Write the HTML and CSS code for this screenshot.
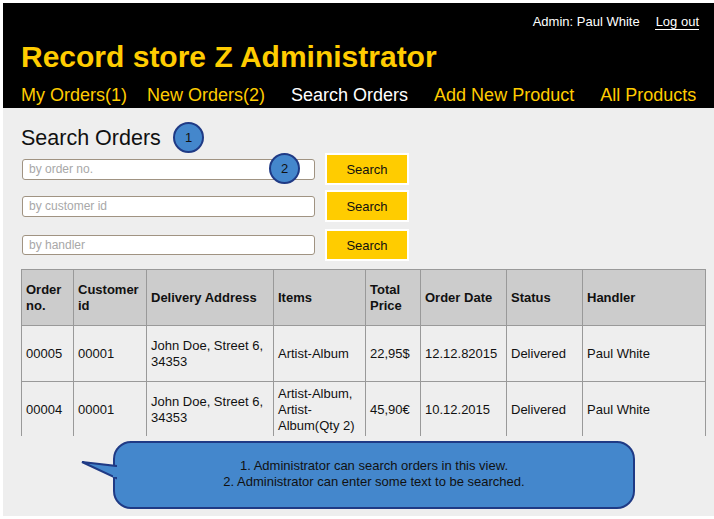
FILE: index.html
```html
<!DOCTYPE html>
<html>
<head>
<meta charset="utf-8">
<title>Search Orders</title>
<link rel="stylesheet" href="styles.css">
</head>
<body>
<div class="page">
  <header class="header">
    <div class="topbar">
      <span class="admin">Admin: Paul White</span>
      <a class="logout" href="#">Log out</a>
    </div>
    <div class="title">Record store Z Administrator</div>
    <nav class="nav">
      <a class="nav-item first" href="#">My Orders(1)</a>
      <a class="nav-item" href="#">New Orders(2)</a>
      <a class="nav-item active" href="#">Search Orders</a>
      <a class="nav-item" href="#">Add New Product</a>
      <a class="nav-item" href="#">All Products</a>
    </nav>
  </header>

  <main class="content">
    <h1 class="heading">Search Orders</h1>
    <div class="search-row row1">
      <input class="search-input" type="text" placeholder="by order no.">
      <button class="search-btn">Search</button>
    </div>
    <div class="search-row row2">
      <input class="search-input" type="text" placeholder="by customer id">
      <button class="search-btn">Search</button>
    </div>
    <div class="search-row row3">
      <input class="search-input" type="text" placeholder="by handler">
      <button class="search-btn">Search</button>
    </div>

    <div class="table-wrap">
      <table class="orders">
        <colgroup>
          <col class="c1"><col class="c2"><col class="c3"><col class="c4">
          <col class="c5"><col class="c6"><col class="c7"><col class="c8">
        </colgroup>
        <thead>
          <tr>
            <th>Order<br>no.</th>
            <th>Customer<br>id</th>
            <th>Delivery Address</th>
            <th>Items</th>
            <th>Total<br>Price</th>
            <th>Order Date</th>
            <th>Status</th>
            <th>Handler</th>
          </tr>
        </thead>
        <tbody>
          <tr>
            <td>00005</td>
            <td>00001</td>
            <td>John Doe, Street 6,<br>34353</td>
            <td>Artist-Album</td>
            <td>22,95$</td>
            <td>12.12.82015</td>
            <td>Delivered</td>
            <td>Paul White</td>
          </tr>
          <tr>
            <td>00004</td>
            <td>00001</td>
            <td>John Doe, Street 6,<br>34353</td>
            <td>Artist-Album,<br>Artist-<br>Album(Qty 2)</td>
            <td>45,90€</td>
            <td>10.12.2015</td>
            <td>Delivered</td>
            <td>Paul White</td>
          </tr>
        </tbody>
      </table>
    </div>
  </main>

  <div class="badge badge1">1</div>
  <div class="badge badge2">2</div>

  <div class="callout">
    <svg class="callout-tail" width="40" height="24" viewBox="0 0 40 24">
      <polygon points="2,3 36,7 36,19" fill="#4487cc" stroke="#1f3a85" stroke-width="2" stroke-linejoin="miter"/>
      <rect x="33" y="8" width="7" height="10" fill="#4487cc"/>
    </svg>
    <div class="callout-text">1. Administrator can search orders in this view.<br>2. Administrator can enter some text to be searched.</div>
  </div>
</div>
</body>
</html>
```

FILE: styles.css
```css
* { box-sizing: border-box; }

html, body {
  margin: 0;
  padding: 0;
  background: #ffffff;
}

.page {
  position: relative;
  margin: 3px 0 0 3px;
  height: 513px;
  background: #eeeeee;
  font-family: "Liberation Sans", Arial, sans-serif;
  color: #111;
  overflow: hidden;
}

/* Header */
.header {
  background: #000;
  height: 105px;
  display: flex;
  flex-direction: column;
}

.topbar {
  display: flex;
  justify-content: flex-end;
  align-items: flex-start;
  gap: 15px;
  padding: 11px 15px 0 0;
  font-size: 13px;
  line-height: 15px;
  color: #fff;
}

.logout {
  color: #fff;
  text-decoration: none;
  border-bottom: 1px solid #fff;
  padding-left: 1px;
  height: 16px;
}

.title {
  margin-top: 10px;
  padding-left: 18px;
  font-size: 30px;
  line-height: 34px;
  font-weight: bold;
  color: #ffcc00;
}

.nav {
  display: flex;
  gap: 26px;
  margin-top: 11px;
  padding-left: 18px;
  font-size: 18px;
  line-height: 21px;
}

.nav-item {
  color: #ffcc00;
  text-decoration: none;
}

.nav-item.first { margin-right: -6px; }

.nav-item.active { color: #fff; }

/* Content */
.content {
  padding-left: 18px;
}

.heading {
  margin: 17px 0 0 0;
  font-size: 21.5px;
  line-height: 26px;
  font-weight: normal;
  color: #111;
}

.search-row {
  display: flex;
  align-items: center;
  height: 32px;
}

.row1 { margin-top: 2px; }
.row2 { margin-top: 5px; }
.row3 { margin-top: 7px; }

.search-input {
  width: 293px;
  height: 21px;
  margin: 0 10px 0 1px;
  padding: 0 6px;
  border: 1px solid #a09382;
  border-radius: 3px;
  background: #fff;
  font-family: "Liberation Sans", Arial, sans-serif;
  font-size: 12px;
  color: #333;
  outline: none;
}

.search-row.row3 .search-input { height: 20px; }

.search-input::placeholder { color: #a8a8a8; }

.search-btn {
  width: 84px;
  height: 32px;
  border: 2px solid #fff;
  background: #ffcc00;
  font-family: "Liberation Sans", Arial, sans-serif;
  font-size: 13px;
  color: #111;
  padding: 0;
  cursor: pointer;
}

/* Table */
.table-wrap {
  margin-top: 8px;
  width: 686px;
  height: 167px;
  overflow: hidden;
}

.orders {
  border-collapse: collapse;
  table-layout: fixed;
  width: 685px;
  font-size: 13px;
  line-height: 16px;
  color: #111;
}

.orders .c1 { width: 52px; }
.orders .c2 { width: 73px; }
.orders .c3 { width: 127px; }
.orders .c4 { width: 92px; }
.orders .c5 { width: 55px; }
.orders .c6 { width: 86px; }
.orders .c7 { width: 76px; }
.orders .c8 { width: 123px; }

.orders th,
.orders td {
  border: 1px solid #999;
  padding: 0 4px 0 4px;
  text-align: left;
  vertical-align: middle;
}

.orders th {
  background: #cccccc;
  font-weight: bold;
}

.orders tr { height: 56px; }

.orders td { background: #eeeeee; }

/* Annotation badges */
.badge {
  position: absolute;
  width: 31px;
  height: 31px;
  border-radius: 50%;
  background: #4487cc;
  border: 2px solid #1f3a85;
  display: flex;
  align-items: center;
  justify-content: center;
  font-size: 13px;
  color: #111;
}

.badge1 { left: 170px; top: 119px; }
.badge2 { left: 266px; top: 150px; }

/* Callout */
.callout {
  position: absolute;
  left: 110px;
  top: 438px;
  width: 522px;
  height: 68px;
  background: #4487cc;
  border: 2px solid #1f3a85;
  border-radius: 18px;
  display: flex;
  align-items: center;
  justify-content: center;
}

.callout-tail {
  position: absolute;
  left: -35px;
  top: 16px;
}

.callout-text {
  text-align: center;
  font-size: 13px;
  line-height: 16px;
  color: #111;
  margin-top: -3px;
}
```
